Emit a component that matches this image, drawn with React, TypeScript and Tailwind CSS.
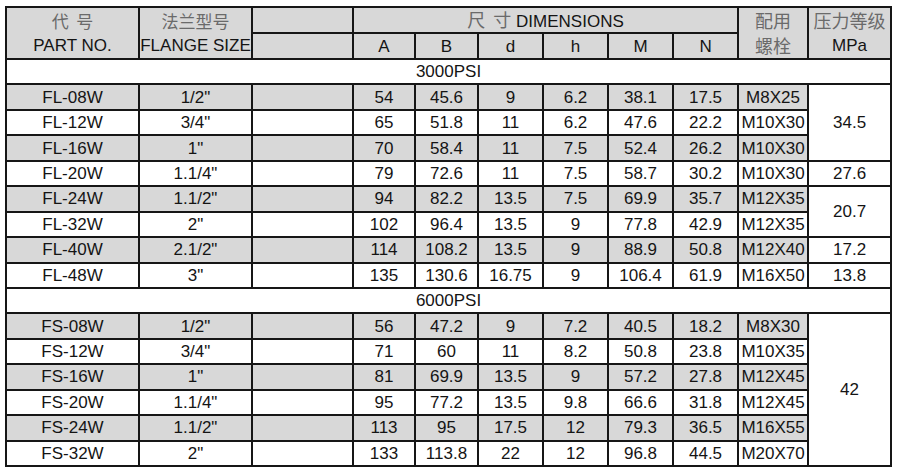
import React from 'react';

type Row = {
  part: string;
  flange: string;
  a: string;
  b: string;
  d: string;
  h: string;
  m: string;
  n: string;
  bolt: string;
  mpa?: string;
  span?: number;
};

const rows3000: Row[] = [
  { part: 'FL-08W', flange: '1/2"', a: '54', b: '45.6', d: '9', h: '6.2', m: '38.1', n: '17.5', bolt: 'M8X25', mpa: '34.5', span: 3 },
  { part: 'FL-12W', flange: '3/4"', a: '65', b: '51.8', d: '11', h: '6.2', m: '47.6', n: '22.2', bolt: 'M10X30' },
  { part: 'FL-16W', flange: '1"', a: '70', b: '58.4', d: '11', h: '7.5', m: '52.4', n: '26.2', bolt: 'M10X30' },
  { part: 'FL-20W', flange: '1.1/4"', a: '79', b: '72.6', d: '11', h: '7.5', m: '58.7', n: '30.2', bolt: 'M10X30', mpa: '27.6', span: 1 },
  { part: 'FL-24W', flange: '1.1/2"', a: '94', b: '82.2', d: '13.5', h: '7.5', m: '69.9', n: '35.7', bolt: 'M12X35', mpa: '20.7', span: 2 },
  { part: 'FL-32W', flange: '2"', a: '102', b: '96.4', d: '13.5', h: '9', m: '77.8', n: '42.9', bolt: 'M12X35' },
  { part: 'FL-40W', flange: '2.1/2"', a: '114', b: '108.2', d: '13.5', h: '9', m: '88.9', n: '50.8', bolt: 'M12X40', mpa: '17.2', span: 1 },
  { part: 'FL-48W', flange: '3"', a: '135', b: '130.6', d: '16.75', h: '9', m: '106.4', n: '61.9', bolt: 'M16X50', mpa: '13.8', span: 1 },
];

const rows6000: Row[] = [
  { part: 'FS-08W', flange: '1/2"', a: '56', b: '47.2', d: '9', h: '7.2', m: '40.5', n: '18.2', bolt: 'M8X30', mpa: '42', span: 6 },
  { part: 'FS-12W', flange: '3/4"', a: '71', b: '60', d: '11', h: '8.2', m: '50.8', n: '23.8', bolt: 'M10X35' },
  { part: 'FS-16W', flange: '1"', a: '81', b: '69.9', d: '13.5', h: '9', m: '57.2', n: '27.8', bolt: 'M12X45' },
  { part: 'FS-20W', flange: '1.1/4"', a: '95', b: '77.2', d: '13.5', h: '9.8', m: '66.6', n: '31.8', bolt: 'M12X45' },
  { part: 'FS-24W', flange: '1.1/2"', a: '113', b: '95', d: '17.5', h: '12', m: '79.3', n: '36.5', bolt: 'M16X55' },
  { part: 'FS-32W', flange: '2"', a: '133', b: '113.8', d: '22', h: '12', m: '96.8', n: '44.5', bolt: 'M20X70' },
];

const cell = 'border-2 border-[#161616] p-0 text-center whitespace-nowrap';
const cjk = "font-['Noto_Sans_CJK_SC',sans-serif] text-[#6a6a6a]";

const DataRows = ({ rows }: { rows: Row[] }) => (
  <>
    {rows.map((r, i) => {
      const bg = i % 2 === 0 ? 'bg-[#d8d8d8]' : 'bg-white';
      return (
        <tr key={r.part} className="h-[25.45px]">
          <td className={`${cell} ${bg}`}>{r.part}</td>
          <td className={`${cell} ${bg}`}>{r.flange}</td>
          <td className={`${cell} ${bg}`}></td>
          <td className={`${cell} ${bg}`}>{r.a}</td>
          <td className={`${cell} ${bg}`}>{r.b}</td>
          <td className={`${cell} ${bg}`}>{r.d}</td>
          <td className={`${cell} ${bg}`}>{r.h}</td>
          <td className={`${cell} ${bg}`}>{r.m}</td>
          <td className={`${cell} ${bg}`}>{r.n}</td>
          <td className={`${cell} ${bg}`}>{r.bolt}</td>
          {r.mpa && (
            <td rowSpan={r.span} className={`${cell} bg-white`}>
              {r.mpa}
            </td>
          )}
        </tr>
      );
    })}
  </>
);

export default function App() {
  return (
    <div className="min-h-screen bg-white pl-[5px] pt-[6px] font-['Liberation_Sans',Arial,sans-serif] text-[17px] leading-none text-[#141414]">
      <table className="w-[886px] table-fixed border-collapse border-2 border-[#161616]">
        <colgroup>
          <col className="w-[133px]" />
          <col className="w-[113px]" />
          <col className="w-[101px]" />
          <col className="w-[62px]" />
          <col className="w-[63px]" />
          <col className="w-[65px]" />
          <col className="w-[65px]" />
          <col className="w-[65px]" />
          <col className="w-[65px]" />
          <col className="w-[70px]" />
          <col className="w-[83px]" />
        </colgroup>
        <thead>
          <tr className="h-[25.45px]">
            <td rowSpan={2} className={`${cell} bg-[#d8d8d8] leading-[25px]`}>
              <div className={cjk}>代&nbsp;&nbsp;号</div>
              <div>PART NO.</div>
            </td>
            <td rowSpan={2} className={`${cell} bg-[#d8d8d8] leading-[25px]`}>
              <div className={cjk}>法兰型号</div>
              <div>FLANGE SIZE</div>
            </td>
            <td className={`${cell} bg-[#d8d8d8]`}></td>
            <td colSpan={6} className={`${cell} bg-[#d8d8d8]`}>
              <span className={`${cjk} text-[18px]`}>尺&nbsp;&nbsp;寸</span> DIMENSIONS
            </td>
            <td rowSpan={2} className={`${cell} bg-[#d8d8d8] leading-[25px]`}>
              <div className={`${cjk} text-[18px]`}>配用</div>
              <div className={`${cjk} text-[18px]`}>螺栓</div>
            </td>
            <td rowSpan={2} className={`${cell} bg-[#d8d8d8] leading-[25px]`}>
              <div className={`${cjk} text-[18px]`}>压力等级</div>
              <div>MPa</div>
            </td>
          </tr>
          <tr className="h-[25.45px]">
            <td className={`${cell} bg-[#d8d8d8]`}></td>
            <td className={`${cell} bg-[#d8d8d8]`}>A</td>
            <td className={`${cell} bg-[#d8d8d8]`}>B</td>
            <td className={`${cell} bg-[#d8d8d8]`}>d</td>
            <td className={`${cell} bg-[#d8d8d8]`}>h</td>
            <td className={`${cell} bg-[#d8d8d8]`}>M</td>
            <td className={`${cell} bg-[#d8d8d8]`}>N</td>
          </tr>
        </thead>
        <tbody>
          <tr className="h-[25.45px]">
            <td colSpan={11} className={`${cell} bg-white`}>3000PSI</td>
          </tr>
          <DataRows rows={rows3000} />
          <tr className="h-[25.45px]">
            <td colSpan={11} className={`${cell} bg-white`}>6000PSI</td>
          </tr>
          <DataRows rows={rows6000} />
        </tbody>
      </table>
    </div>
  );
}
